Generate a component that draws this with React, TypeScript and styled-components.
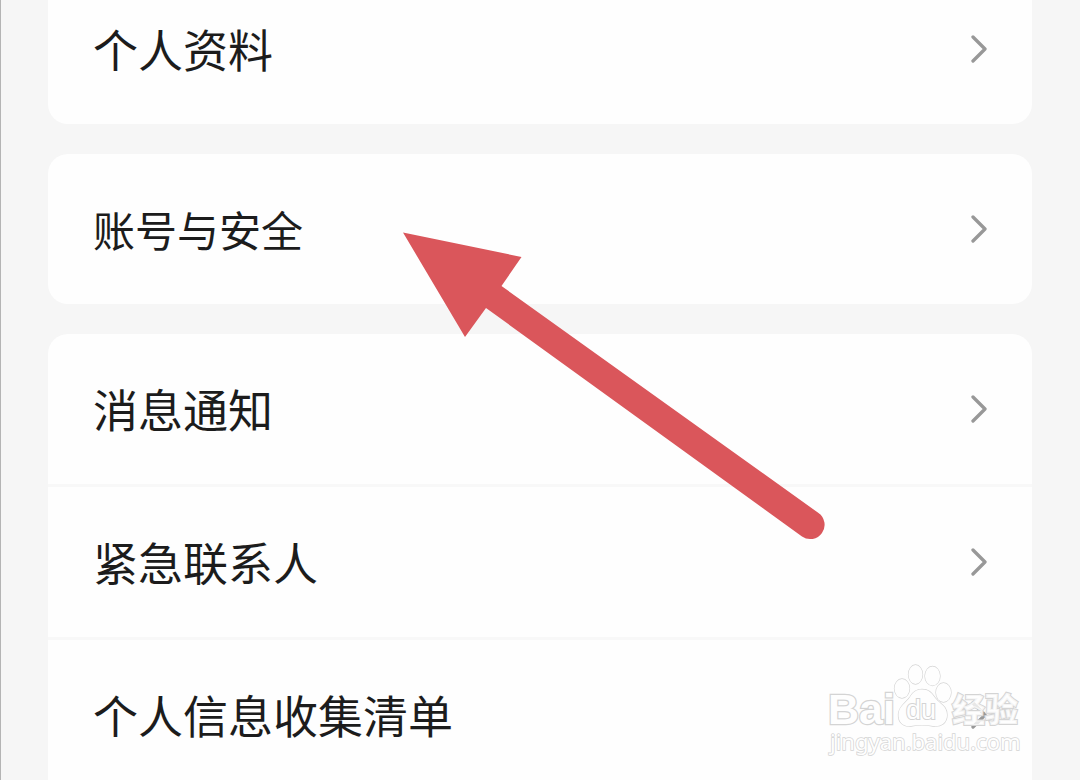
import React from 'react';
import styled, { createGlobalStyle } from 'styled-components';

const GlobalStyle = createGlobalStyle`
  body {
    margin: 0;
    background: #f6f6f6;
    font-family: "Noto Sans CJK SC", sans-serif;
  }
`;

const Page = styled.main`
  position: relative;
  box-sizing: border-box;
  height: 100vh;
  overflow: hidden;
  padding: 0 48px 0 47px;
  border-left: 1px solid #b4b4b4;
  background: #f6f6f6;
`;

/* The list is scrolled, so the first card starts above the window. */
const Groups = styled.div`
  display: flex;
  flex-direction: column;
  gap: 30px;
  margin-top: -26px;
`;

const Card = styled.ul<{ $open?: boolean }>`
  margin: 0;
  padding: 0;
  list-style: none;
  overflow: hidden;
  border-radius: ${(p) => (p.$open ? '20px 20px 0 0' : '20px')};
  background: #fefefe;
`;

const Item = styled.li`
  & + & {
    border-top: 3px solid #f8f8f8;
  }
`;

const RowLink = styled.a<{ $compact?: boolean }>`
  display: flex;
  align-items: center;
  justify-content: space-between;
  height: 150px;
  padding: 0 44px 0 45px;
  color: #1c1c1c;
  font-size: ${(p) => (p.$compact ? 42 : 45)}px;
  line-height: 60px;
  text-decoration: none;
`;

const ChevronIcon = styled.svg`
  flex: none;
  width: 18px;
  height: 28px;
  fill: none;
  stroke: #989898;
  stroke-width: 3.3;
  stroke-linecap: round;
  stroke-linejoin: round;
`;

const Pointer = styled.svg`
  position: absolute;
  top: 232px;
  left: 401px;
  width: 424px;
  height: 308px;
  pointer-events: none;
`;

const Watermark = styled.svg`
  position: absolute;
  right: 54px;
  bottom: 20px;
  width: 200px;
  height: 100px;
  pointer-events: none;
  fill: #fefefe;
  stroke: #d4d4d4;
  stroke-width: 1.3;
  paint-order: stroke;
`;

const groups = [
  { items: ['个人资料'] },
  { items: ['账号与安全'], compact: true },
  { items: ['消息通知', '紧急联系人', '个人信息收集清单'], open: true },
];

function Chevron() {
  return (
    <ChevronIcon viewBox="0 0 18 28" aria-hidden="true">
      <path d="M3 2 L15 14 L3 26" />
    </ChevronIcon>
  );
}

export default function App() {
  return (
    <>
      <GlobalStyle />
      <Page>
        <Groups>
          {groups.map((group) => (
            <Card key={group.items[0]} $open={group.open}>
              {group.items.map((label) => (
                <Item key={label}>
                  <RowLink href="#" $compact={group.compact}>
                    <span>{label}</span>
                    <Chevron />
                  </RowLink>
                </Item>
              ))}
            </Card>
          ))}
        </Groups>
        <Pointer viewBox="402 232 424 308" aria-hidden="true">
          <path
            fill="#da565b"
            d="M403 232.500 L521.500 257 L501.500 286 L818.500 513 A14.300 14.300 0 0 1 802 536.500 L486 308 L465 337 Z"
          />
        </Pointer>
        <Watermark viewBox="826 660 200 100" aria-label="Baidu 经验">
          <g fontFamily="Liberation Sans" fontWeight="700">
            <text x="828" y="724" fontSize="43" strokeWidth="2.5">Bai</text>
            <ellipse cx="902" cy="688.500" rx="7.500" ry="9.500" />
            <ellipse cx="915.500" cy="674.500" rx="7" ry="9.500" />
            <ellipse cx="932.500" cy="676" rx="7.500" ry="9.500" />
            <ellipse cx="943.500" cy="692.500" rx="7.500" ry="9.500" />
            <path d="M922 689.500 C930 689.500 932 694 936 699 C940 704 947 706 947 715 C947 723 941 727 933 726 C926 724.500 918 724.500 911 726 C903 727 898 722 898.500 714 C899 706 906 703 910 697 C913 692 916 689.500 922 689.500 Z" />
            <text x="906" y="719" fontSize="27" fontWeight="400" strokeWidth="2">du</text>
          </g>
          <text x="952" y="722" fontSize="33" fontWeight="900" fontFamily="Noto Sans CJK SC" strokeWidth="2" fillOpacity="0.8">经验</text>
          <text x="830" y="750" fontSize="22" fontFamily="Noto Sans" strokeWidth="1.5">jingyan.baidu.com</text>
        </Watermark>
      </Page>
    </>
  );
}
